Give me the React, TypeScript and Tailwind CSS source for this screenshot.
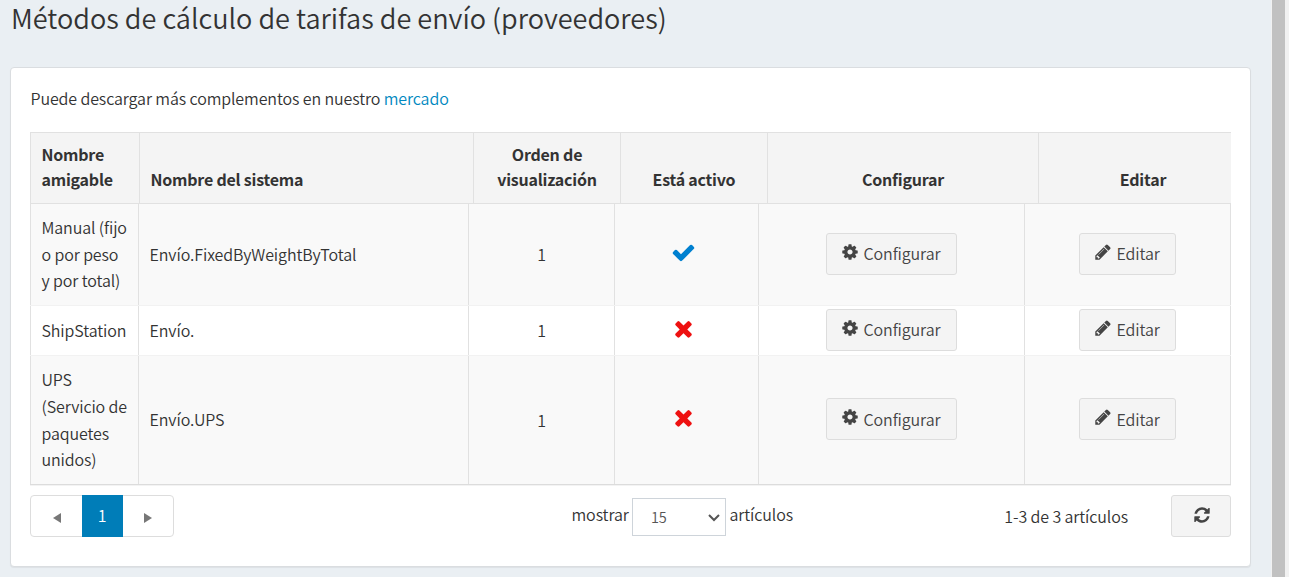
import type { ReactNode } from 'react';

const PATHS = {
  check:
    'M1671 566q0 40-28 68l-724 724-136 136q-28 28-68 28t-68-28l-136-136-362-362q-28-28-28-68t28-68l136-136q28-28 68-28t68 28l294 295 656-657q28-28 68-28t68 28l136 136q28 28 28 68z',
  times:
    'M1490 1322q0 40-28 68l-136 136q-28 28-68 28t-68-28l-294-294-294 294q-28 28-68 28t-68-28l-136-136q-28-28-28-68t28-68l294-294-294-294q-28-28-28-68t28-68l136-136q28-28 68-28t68 28l294 294 294-294q28-28 68-28t68 28l136 136q28 28 28 68t-28 68l-294 294 294 294q28 28 28 68z',
  cog: 'M1152 896q0-106-75-181t-181-75-181 75-75 181 75 181 181 75 181-75 75-181zm512-109v222q0 12-8 23t-20 13l-185 28q-19 54-39 91 35 50 107 138 10 12 10 25t-9 23q-27 37-99 108t-94 71q-12 0-26-9l-138-108q-44 23-91 38-16 136-29 186-7 28-36 28h-222q-14 0-24.500-8.500t-11.500-21.500l-28-184q-49-16-90-37l-141 107q-10 9-25 9-14 0-25-11-126-114-165-168-7-10-7-23 0-12 8-23 15-21 51-66.500t54-70.500q-27-50-41-99l-183-27q-13-2-21-12.500t-8-23.500v-222q0-12 8-23t19-13l186-28q14-46 39-92-40-57-107-138-10-12-10-24 0-10 9-23 26-36 98.500-107.500t94.500-71.500q13 0 26 10l138 107q44-23 91-38 16-136 29-186 7-28 36-28h222q14 0 24.500 8.500t11.500 21.500l28 184q49 16 90 37l142-107q9-9 24-9 13 0 25 10 129 119 165 170 7 8 7 22 0 12-8 23-15 21-51 66.500t-54 70.500q26 50 41 98l183 28q13 2 21 12.500t8 23.500z',
  pencil:
    'M491 1536l91-91-235-235-91 91v107h128v128h107zm523-928q0-22-22-22-10 0-17 7l-542 542q-7 7-7 17 0 22 22 22 10 0 17-7l542-542q7-7 7-17zm-54-192l416 416-832 832h-416v-416zm683 96q0 53-37 90l-166 166-416-416 166-165q36-38 90-38 53 0 91 38l235 234q37 39 37 91z',
  refresh:
    'M1639 1056q0 5-1 7-64 268-268 434.500t-478 166.500q-146 0-282.500-55t-243.500-157l-129 129q-19 19-45 19t-45-19-19-45v-448q0-26 19-45t45-19h448q26 0 45 19t19 45-19 45l-137 137q71 66 161 102t187 36q134 0 250-65t186-179q11-17 53-117 8-23 30-23h192q13 0 22.500 9.500t9.500 22.500zm25-800v448q0 26-19 45t-45 19h-448q-26 0-45-19t-19-45 19-45l138-138q-148-137-349-137-134 0-250 65t-186 179q-11 17-53 117-8 23-30 23h-199q-13 0-22.500-9.500t-9.500-22.500v-7q65-268 270-434.500t480-166.500q146 0 284 55.500t245 156.500l130-129q19-19 45-19t45 19 19 45z',
};

function Icon({ name, className }: { name: keyof typeof PATHS; className: string }) {
  return (
    <svg viewBox="0 0 1792 1792" fill="currentColor" className={className} aria-hidden="true">
      <path d={PATHS[name]} />
    </svg>
  );
}

function ActionButton({ icon, width, children }: { icon: 'cog' | 'pencil'; width: string; children: ReactNode }) {
  return (
    <button
      type="button"
      className={`flex h-[42px] items-center rounded-[3px] border border-[#ddd] bg-[#f4f4f4] pl-[14px] text-[#444] ${width}`}
    >
      <Icon name={icon} className="-mt-[4px] mr-[4.500px] size-[18px] shrink-0" />
      {children}
    </button>
  );
}

const rows = [
  { name: ['Manual (fijo', 'o por peso', 'y por total)'], system: 'Envío.FixedByWeightByTotal', order: 1, active: true },
  { name: ['ShipStation'], system: 'Envío.', order: 1, active: false },
  { name: ['UPS', '(Servicio de', 'paquetes', 'unidos)'], system: 'Envío.UPS', order: 1, active: false },
];

const rowStyles = [
  'h-[102px] bg-[#f9f9f9] border-b border-[#f2f2f2]',
  'h-[50px] bg-white border-b border-[#f2f2f2]',
  'h-[128px] bg-[#f9f9f9]',
];

export default function App() {
  return (
    <div className="flex h-[577px] w-[1289px] overflow-hidden bg-[#eaeff3] font-['Noto_Sans_CJK_SC',sans-serif] text-[16px] leading-[26.6px] font-[350] tracking-[-0.11px] whitespace-nowrap text-[#333]">
      <main className="flex w-[1271px] flex-col pl-[10px]">
        <h1 className="h-[67px] pl-px text-[27.1px] leading-[36px] font-[350] tracking-normal">
          Métodos de cálculo de tarifas de envío (proveedores)
        </h1>
        <section className="h-[500px] w-[1241px] rounded-[4px] border border-[#dadde0] bg-white px-[19px] shadow-[0_1px_1px_rgba(0,0,0,0.06)]">
          <p className="h-[64px] pt-[17px] pl-[0.5px]">
            Puede descargar más complementos en nuestro{' '}
            <a href="#" className="text-[#0088c0]">
              mercado
            </a>
          </p>

          <div className="grid h-[72px] w-[1201px] grid-cols-[109px_334px_147px_147px_271px_193px] border-y border-[#e1e1e1] bg-[#f4f4f4] leading-[25px] font-bold tracking-[-0.22px]">
            <div className="flex items-end border-l border-[#e1e1e1] pb-[11px] pl-[10.5px]">
              <span>
                Nombre
                <br />
                amigable
              </span>
            </div>
            <div className="flex items-end border-l border-[#e1e1e1] pb-[11px] pl-[10.5px]">Nombre del sistema</div>
            <div className="flex items-end justify-center border-l border-[#e1e1e1] pb-[11px] text-center">
              <span>
                Orden de
                <br />
                visualización
              </span>
            </div>
            <div className="flex items-end justify-center border-l border-[#e1e1e1] pb-[11px]">Está activo</div>
            <div className="flex items-end justify-center border-l border-[#e1e1e1] pb-[11px]">Configurar</div>
            <div className="flex items-end justify-center border-l border-[#e1e1e1] pb-[11px] pl-[16px]">Editar</div>
          </div>

          <div className="w-[1201px] border-b border-[#dcdcdc] shadow-[0_1px_0_#f3f3f3]">
            {rows.map((row, i) => (
              <div key={row.system} className={`grid grid-cols-[108px_330px_146px_144px_266px_207px] ${rowStyles[i]}`}>
                <div className="flex items-center border-l border-[#e1e1e1] pb-px pl-[10.5px]">
                  <span>
                    {row.name.map((line) => (
                      <span key={line} className="block">
                        {line}
                      </span>
                    ))}
                  </span>
                </div>
                <div className="flex items-center border-l border-[#e1e1e1] pb-px pl-[10.5px] tracking-[-0.08px]">
                  {row.system}
                </div>
                <div className="flex items-center justify-center border-l border-[#e1e1e1]">{row.order}</div>
                <div className="flex items-center justify-center border-l border-[#e1e1e1] pr-[7px] pb-[5px]">
                  {row.active ? (
                    <Icon name="check" className="size-[25px] text-[#0080d0]" />
                  ) : (
                    <Icon name="times" className="size-[25px] text-[#ee1111]" />
                  )}
                </div>
                <div className="flex items-center justify-center border-l border-[#e1e1e1] pb-[2px]">
                  <ActionButton icon="cog" width="w-[131px]">
                    Configurar
                  </ActionButton>
                </div>
                <div className="flex items-center justify-center border-x border-[#e1e1e1] pb-[2px]">
                  <ActionButton icon="pencil" width="w-[97px]">
                    Editar
                  </ActionButton>
                </div>
              </div>
            ))}
          </div>

          <div className="mt-[10px] flex h-[42px] w-[1201px] items-center">
            <nav className="flex h-[42px] w-[144px] rounded-[4px] border border-[#ddd] text-[#777]">
              <button type="button" className="flex w-[51px] items-center justify-center" aria-label="Anterior">
                <svg viewBox="0 0 8 10" className="mt-[3px] h-[10px] w-[8px]" fill="currentColor">
                  <path d="M8 0v10L0 5z" />
                </svg>
              </button>
              <button type="button" className="-my-px flex h-[42px] w-[41px] items-center justify-center bg-[#007db8] pr-px pb-[2px] text-white">
                1
              </button>
              <button type="button" className="flex w-[50px] items-center justify-center" aria-label="Siguiente">
                <svg viewBox="0 0 8 10" className="mt-[3px] mr-px h-[10px] w-[8px]" fill="currentColor">
                  <path d="M0 0v10l8-5z" />
                </svg>
              </button>
            </nav>
            <span className="ml-[397.5px] w-[60.5px] pb-[3px]">mostrar</span>
            <div className="mt-[2px] flex h-[38px] w-[94px] items-center justify-between border border-[#ced4da] bg-white pr-[5px] pl-[18px] text-[14.5px] text-[#555]">
              15
              <svg viewBox="0 0 12 8" className="mt-[1px] h-[8px] w-[12px]" fill="none" stroke="#555" strokeWidth="2">
                <path d="M1 1l5 5 5-5" />
              </svg>
            </div>
            <span className="ml-[3.5px] pb-[3px]">artículos</span>
            <span className="mr-[43px] ml-auto">1-3 de 3 artículos</span>
            <button
              type="button"
              aria-label="Actualizar"
              className="flex h-[42px] w-[60px] items-center justify-center rounded-[3px] border border-[#ddd] bg-[#f4f4f4] pb-[3px] pl-px text-[#444]"
            >
              <Icon name="refresh" className="size-[18px]" />
            </button>
          </div>
        </section>
      </main>
      <div className="flex grow bg-[#f1f1f1] pl-[1px]">
        <div className="w-[13px] bg-[#c1c1c1]" />
      </div>
    </div>
  );
}
